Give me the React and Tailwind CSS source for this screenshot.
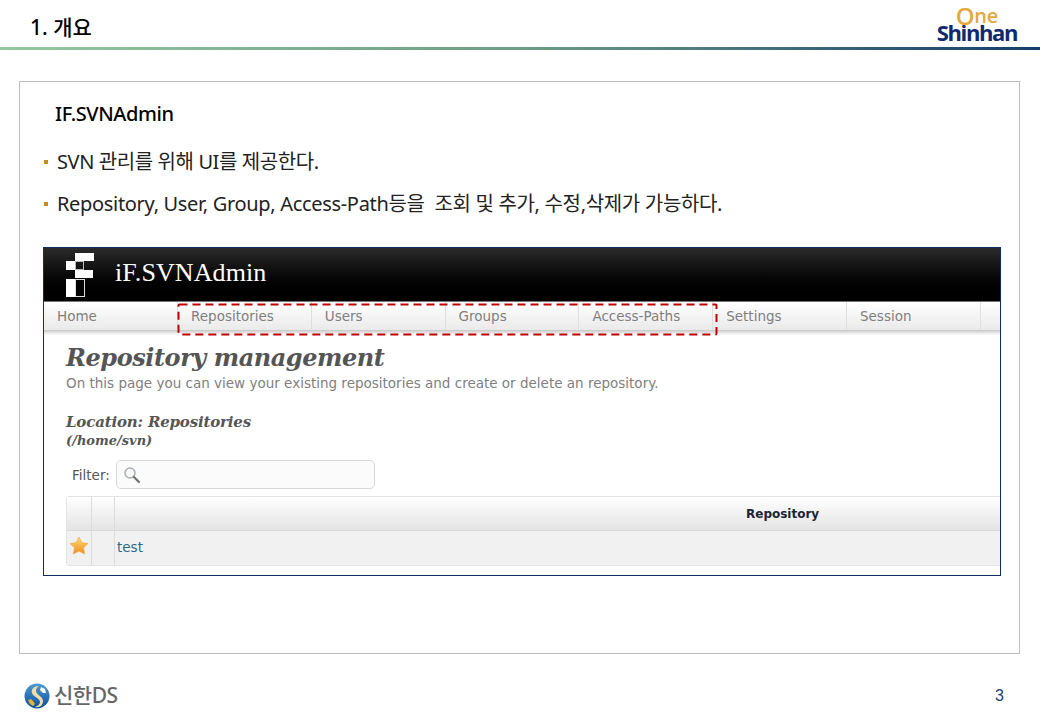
import React from 'react';

const navItems = ['Home', 'Repositories', 'Users', 'Groups', 'Access-Paths', 'Settings', 'Session'];

const FONT_KR = "font-['Noto_Sans','Noto_Sans_CJK_KR',sans-serif]";
const FONT_DEJAVU = "font-['DejaVu_Sans',sans-serif]";
const FONT_SERIF = "font-['DejaVu_Serif',serif]";

function CheckerLogo() {
  return (
    <svg width="28" height="46" viewBox="0 0 28 46" className="shrink-0">
      <rect x="9" y="1" width="19" height="8" fill="#fff" />
      <rect x="0" y="9" width="9" height="9" fill="#fff" />
      <rect x="9.500" y="9.500" width="8" height="8" fill="none" stroke="#bbb" />
      <rect x="9" y="18" width="18" height="8" fill="#fff" />
      <rect x="0" y="27" width="9" height="18" fill="#fff" />
      <rect x="9.500" y="27.500" width="9" height="17" fill="none" stroke="#ddd" />
    </svg>
  );
}

function ShinhanMark() {
  return (
    <svg width="26" height="26" viewBox="0 0 26 26" className="shrink-0">
      <defs>
        <linearGradient id="ball" x1="0" y1="0" x2="0" y2="1">
          <stop offset="0" stopColor="#4d9ad6" />
          <stop offset="1" stopColor="#0d4f9a" />
        </linearGradient>
      </defs>
      <circle cx="13" cy="13" r="12.5" fill="url(#ball)" />
      <path d="M15 3C10 3 7 6 8 10c1 4 8 5 8 9 0 2-2 4-5 5 5 1 8-2 8-6 0-5-7-6-7-10 0-2 1-4 3-5z" fill="#f0dca6" />
      <path d="M17 4l4 2 1 4-3 0-3-3z" fill="#fff" />
      <path d="M4 17l3-1 2 2 2 3-2 2-3-2z" fill="#e3b23c" />
    </svg>
  );
}

function StarIcon() {
  return (
    <svg width="20" height="19" viewBox="0 0 20 19">
      <defs>
        <linearGradient id="star" x1="0" y1="0" x2="0" y2="1">
          <stop offset="0" stopColor="#ffe07a" />
          <stop offset="1" stopColor="#f08a1c" />
        </linearGradient>
      </defs>
      <path d="M10 1l2.8 5.6 6.2.9-4.500 4.300 1.100 6.200L10 15.100 4.400 18l1.100-6.200L1 7.500l6.200-.9z" fill="url(#star)" stroke="#e8a53a" strokeWidth="0.6" />
    </svg>
  );
}

function SearchIcon() {
  return (
    <svg width="18" height="18" viewBox="0 0 18 18" fill="none">
      <circle cx="7" cy="7" r="5" stroke="#a9adb3" strokeWidth="1.5" fill="#f7f8f9" />
      <path d="M11 11l5 5" stroke="#6f7074" strokeWidth="2.200" strokeLinecap="round" />
    </svg>
  );
}

function SvnAdminShot() {
  return (
    <div className={`relative mt-[29px] ml-[23px] w-[958px] h-[329px] border border-[#0d2f5c] overflow-hidden bg-white ${FONT_DEJAVU}`}>
      {/* top bar */}
      <div className="flex items-center h-[54px] pl-[22px] bg-gradient-to-b from-[#2b2b2b] to-[#000000] border-b border-[#777]">
        <CheckerLogo />
        <span className="ml-[21px] mb-[4px] text-[26px] leading-none text-white font-['Liberation_Serif',serif] tracking-[0.1px]">iF.SVNAdmin</span>
      </div>

      {/* nav */}
      <div className="flex h-[28px] bg-gradient-to-b from-[#ffffff] to-[#eaeaea]">
        {navItems.map((item, i) => (
          <div
            key={item}
            className={`shrink-0 h-full flex items-center pl-[13px] pt-[1px] text-[13.500px] text-[#7f7f7f] border-r border-[#dedede] ${i === 0 ? 'w-[134px]' : 'w-[133.8px]'}`}
          >
            {item}
          </div>
        ))}
      </div>
      <div className="h-[5px] bg-gradient-to-b from-[#c6c6c6] to-[#ffffff]" />

      {/* dashed highlight over the nav */}
      <svg width="542" height="34" className="absolute left-[133px] top-[55px]" fill="none">
        <rect x="1.500" y="1.500" width="538" height="30" rx="1" stroke="#c00000" strokeWidth="2" strokeDasharray="8 5" />
      </svg>

      {/* page content */}
      <div className="pl-[22px]">
        <h1 className={`mt-[7px] text-[24px] leading-[32px] font-bold italic text-[#555] tracking-[-0.45px] ${FONT_SERIF}`}>Repository management</h1>
        <p className="text-[13.500px] leading-[18px] text-[#808080]">On this page you can view your existing repositories and create or delete an repository.</p>
        <h2 className={`mt-[21px] text-[15px] leading-[18px] font-bold italic text-[#555] tracking-[-0.18px] ${FONT_SERIF}`}>Location: Repositories</h2>
        <p className={`mt-[2px] text-[13px] leading-[16px] font-bold italic text-[#555] ${FONT_SERIF}`}>(/home/svn)</p>

        <div className="flex items-center mt-[11px] pl-[6px]">
          <span className="w-[44px] pt-[1px] text-[13.500px] text-[#555]">Filter:</span>
          <div className="flex items-center w-[259px] h-[29px] pl-[6px] rounded-[5px] border border-[#d8d8d8] bg-[#fbfbfb]">
            <SearchIcon />
          </div>
        </div>

        <div className="mt-[7px] mr-[-3px] border border-[#e2e2e2] rounded-[3px] text-[13.500px]">
          <div className="flex h-[34px] bg-gradient-to-b from-[#ffffff] to-[#e4e4e4] border-b border-[#d8d8d8]">
            <div className="w-[25px] border-r border-[#dcdcdc]" />
            <div className="w-[23px] border-r border-[#dcdcdc]" />
            <div className="flex-1 flex items-center pl-[631px] text-[12px] font-bold text-[#1c2430]">Repository</div>
          </div>
          <div className="flex h-[34px] bg-[#f1f1f1]">
            <div className="w-[25px] flex items-center justify-center pb-[6px] border-r border-[#dcdcdc]">
              <StarIcon />
            </div>
            <div className="w-[23px] border-r border-[#dcdcdc]" />
            <div className="flex-1 flex items-center pl-[2px] pb-[2px] text-[#2f6a8e]">test</div>
          </div>
        </div>
      </div>
    </div>
  );
}

export default function App() {
  return (
    <div className={`w-[1040px] h-[720px] flex flex-col bg-white overflow-hidden ${FONT_KR}`}>
      {/* slide header */}
      <header className="relative h-[47px] flex items-center pl-[30px]">
        <span className="mt-[9px] text-[21px] font-medium text-black">1. 개요</span>
        <div className="absolute right-[23px] top-[8px] flex flex-col items-end font-['Open_Sans',sans-serif] leading-none">
          <span className="mr-[19px] h-[15px] flex items-end text-[20px] leading-[15px] font-semibold text-[#e3a93c] tracking-[-0.3px]">
            <span className="text-[24px] leading-[15px] font-semibold">O</span>ne
          </span>
          <span className="h-[19px] text-[22px] leading-[19px] font-bold text-[#12296f] tracking-[-1.4px]">Shinhan</span>
        </div>
      </header>
      <div className="h-[3px] bg-gradient-to-r from-[#93c9a0] via-[#6f9d86] to-[#123e6b]" />

      {/* slide body */}
      <main className="mt-[31px] ml-[19px] w-[1001px] h-[573px] border border-[#bdbdbd] bg-white shrink-0">
        <h2 className="mt-[18px] ml-[35px] text-[20px] font-medium leading-[27px] text-black tracking-[-0.4px]">IF.SVNAdmin</h2>
        <ul className="mt-[21px] ml-[24px] text-[20px] leading-[28px] text-[#222]">
          <li className="flex items-center tracking-[-0.4px]">
            <span className="w-[4px] h-[4px] mr-[9px] bg-[#c88a1e] shrink-0" />
            SVN 관리를 위해 UI를 제공한다.
          </li>
          <li className="flex items-center mt-[14px] tracking-[-0.32px]">
            <span className="w-[4px] h-[4px] mr-[9px] bg-[#c88a1e] shrink-0" />
            Repository, User, Group, Access-Path등을&nbsp; 조회 및 추가, 수정,삭제가 가능하다.
          </li>
        </ul>
        <SvnAdminShot />
      </main>

      {/* slide footer */}
      <footer className="flex items-center justify-between flex-1 pt-[17px] pl-[24px] pr-[36px]">
        <div className="flex items-center gap-[4px]">
          <ShinhanMark />
          <span className="text-[21px] font-medium text-[#666] tracking-[-0.5px]">신한DS</span>
        </div>
        <span className="text-[16px] text-[#1d3f73] font-['Liberation_Sans',sans-serif]">3</span>
      </footer>
    </div>
  );
}
